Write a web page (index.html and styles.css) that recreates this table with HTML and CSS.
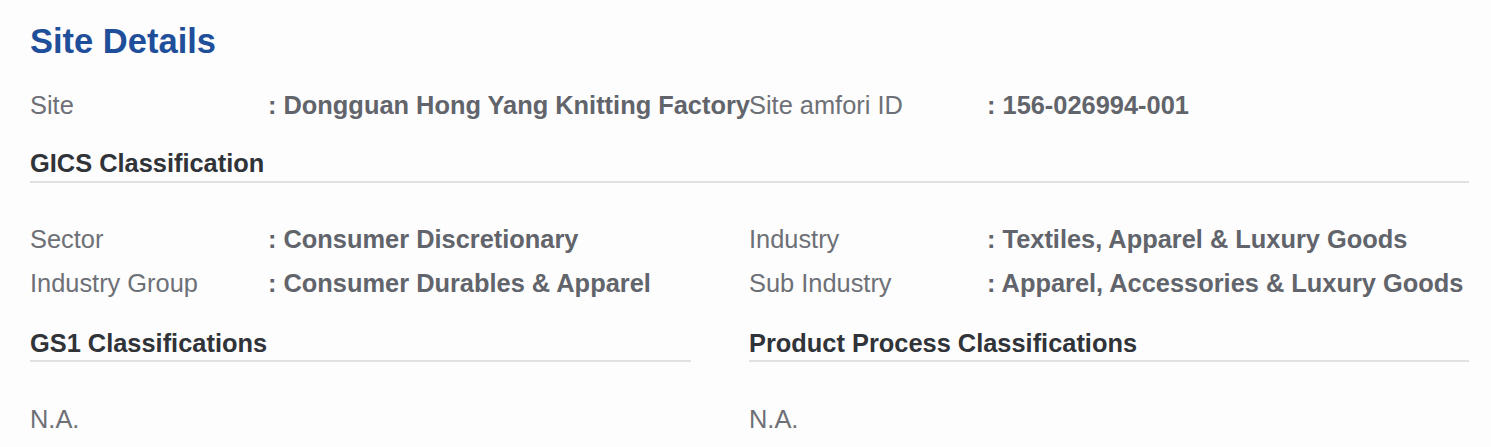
FILE: index.html
```html
<!DOCTYPE html>
<html lang="en">
<head>
<meta charset="utf-8">
<title>Site Details</title>
<link rel="stylesheet" href="styles.css">
</head>
<body>
<main class="page">
  <h1 class="title">Site Details</h1>

  <div class="pair-row top-row">
    <div class="pair">
      <span class="label">Site</span>
      <span class="value nowrap">: Dongguan Hong Yang Knitting Factory</span>
    </div>
    <div class="pair">
      <span class="label">Site amfori ID</span>
      <span class="value">: 156-026994-001</span>
    </div>
  </div>

  <h2 class="section-head gics-head">GICS Classification</h2>

  <div class="pair-grid">
    <div class="pair">
      <span class="label">Sector</span>
      <span class="value">: Consumer Discretionary</span>
    </div>
    <div class="pair">
      <span class="label">Industry</span>
      <span class="value">: Textiles, Apparel &amp; Luxury Goods</span>
    </div>
    <div class="pair">
      <span class="label">Industry Group</span>
      <span class="value">: Consumer Durables &amp; Apparel</span>
    </div>
    <div class="pair">
      <span class="label">Sub Industry</span>
      <span class="value">: Apparel, Accessories &amp; Luxury Goods</span>
    </div>
  </div>

  <div class="class-cols">
    <section class="class-col left-col">
      <h2 class="section-head">GS1 Classifications</h2>
      <p class="na">N.A.</p>
    </section>
    <section class="class-col">
      <h2 class="section-head">Product Process Classifications</h2>
      <p class="na">N.A.</p>
    </section>
  </div>
</main>
</body>
</html>
```

FILE: styles.css
```css
* {
  box-sizing: border-box;
}

html, body {
  margin: 0;
  padding: 0;
  background: #fdfdfd;
}

body {
  font-family: "Liberation Sans", Arial, Helvetica, sans-serif;
  width: 1491px;
  height: 447px;
  overflow: hidden;
}

.page {
  padding: 21px 22px 0 30px;
}

.title {
  margin: 0;
  font-size: 34.5px;
  line-height: 40px;
  font-weight: 700;
  color: #1f4f9a;
}

.pair-row,
.pair-grid {
  display: grid;
  grid-template-columns: 719px 1fr;
}

.top-row {
  margin-top: 29px;
}

.pair {
  display: grid;
  grid-template-columns: 238px 1fr;
  align-items: baseline;
  line-height: 30px;
}

.label {
  font-size: 25.4px;
  color: #6d7076;
  white-space: nowrap;
}

.value {
  font-size: 25.4px;
  font-weight: 700;
  color: #61646b;
  white-space: nowrap;
}

.section-head {
  margin: 0;
  font-size: 25.4px;
  line-height: 30px;
  font-weight: 700;
  color: #303338;
  padding-bottom: 2px;
  border-bottom: 2px solid #e1e1e1;
}

.gics-head {
  margin-top: 28px;
  padding-bottom: 3px;
}

.pair-grid {
  margin-top: 41px;
  row-gap: 14px;
}

.class-cols {
  display: grid;
  grid-template-columns: 719px 1fr;
  margin-top: 30px;
}

.left-col {
  margin-right: 58px;
}

.na {
  margin: 42px 0 0;
  font-size: 25.4px;
  line-height: 30px;
  color: #6d7076;
}
```
